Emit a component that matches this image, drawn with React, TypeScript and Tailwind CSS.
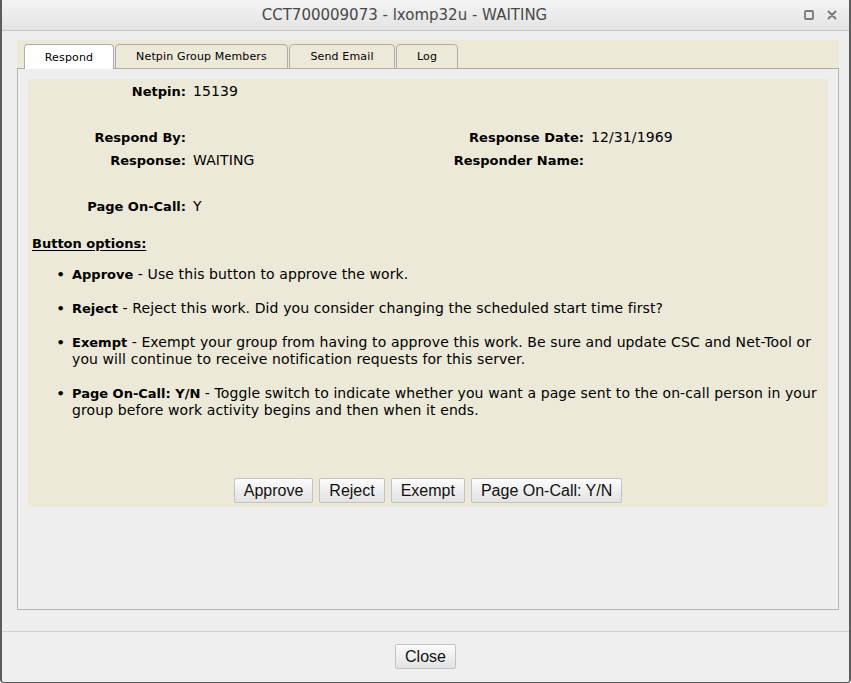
import React from "react";

const tabs = [
  { label: "Respond", w: "w-[90px]", active: true },
  { label: "Netpin Group Members", w: "w-[173px]", active: false },
  { label: "Send Email", w: "w-[106px]", active: false },
  { label: "Log", w: "w-[62px]", active: false },
];

const options = [
  { name: "Approve", text: "Use this button to approve the work." },
  { name: "Reject", text: "Reject this work. Did you consider changing the scheduled start time first?" },
  {
    name: "Exempt",
    text: "Exempt your group from having to approve this work. Be sure and update CSC and Net-Tool or you will continue to receive notification requests for this server.",
  },
  {
    name: "Page On-Call: Y/N",
    text: "Toggle switch to indicate whether you want a page sent to the on-call person in your group before work activity begins and then when it ends.",
  },
];

function Btn({ children }: { children: React.ReactNode }) {
  return (
    <button className="h-[25px] px-[9px] border border-[#c2c2c2] rounded-[2px] bg-gradient-to-b from-[#fcfcfc] to-[#e2e2e2] text-[16px] leading-none text-[#111] font-['Liberation_Sans',Arial,sans-serif]">
      {children}
    </button>
  );
}

function Field({ label, value }: { label: string; value?: string }) {
  return (
    <>
      <div className="text-right font-bold text-[13px] tracking-normal">{label}</div>
      <div className="pl-[7px]">{value}</div>
    </>
  );
}

export default function App() {
  return (
    <div className="w-[851px] h-[683px] flex flex-col bg-[#eeeeee] border-x-2 border-b border-[#5c5c5c] rounded-b-[4px] overflow-hidden font-['DejaVu_Sans',sans-serif] text-black">
      {/* title bar */}
      <div className="h-[31px] shrink-0 flex items-center bg-gradient-to-b from-[#f4f4f4] to-[#e3e3e3] border-b border-[#c4c4c4]">
        <div className="flex-1 pl-[3px] text-center text-[15px] text-[#484848]">
          CCT700009073 - lxomp32u - WAITING
        </div>
        <div className="flex items-center gap-[13px] mr-[12px] text-[#7a7a7a]">
          <svg width="10" height="10" viewBox="0 0 10 10">
            <rect x="1" y="1" width="8" height="8" rx="1" fill="none" stroke="currentColor" strokeWidth="1.8" />
          </svg>
          <svg width="10" height="10" viewBox="0 0 10 10">
            <path d="M1.5 1.5 L8.5 8.5 M8.5 1.5 L1.5 8.5" stroke="currentColor" strokeWidth="2" strokeLinecap="round" />
          </svg>
        </div>
      </div>

      {/* body */}
      <div className="shrink-0 pl-[15px] pr-[10px] pt-[9px] pb-[21px]">
        <div className="h-[29px] flex items-end pl-[7px] gap-[1px] bg-[#ece9d8] border-b border-[#a9a9a9]">
          {tabs.map((t) => (
            <div
              key={t.label}
              className={`${t.w} h-[25px] -mb-px pt-[2px] flex items-center justify-center text-[11px] tracking-[0.15px] rounded-t-[4px] border border-[#adadad] ${
                t.active ? "bg-white border-b-0" : "bg-[#ece9d8]"
              }`}
            >
              {t.label}
            </div>
          ))}
        </div>

        <div className="h-[541px] p-[10px] border-x border-b border-[#b4b4b4]">
          <div className="h-[428px] bg-[#ece9d8] flex flex-col text-[14px] tracking-[0.1px]">
            <div className="pt-[1px] grid grid-cols-[158px_242px_156px_1fr] auto-rows-[23px] items-center">
              <Field label="Netpin:" value="15139" />
              <div />
              <div />
              <div className="col-span-4" />
              <Field label="Respond By:" />
              <Field label="Response Date:" value="12/31/1969" />
              <Field label="Response:" value="WAITING" />
              <Field label="Responder Name:" />
              <div className="col-span-4" />
              <Field label="Page On-Call:" value="Y" />
            </div>

            <div className="mt-[17px] pl-[4px] leading-[17px] text-[13px] font-bold tracking-normal underline underline-offset-2">
              Button options:
            </div>

            <ul className="mt-[14px] flex flex-col gap-[17px] leading-[17px] pr-[1px]">
              {options.map((o) => (
                <li key={o.name} className="flex">
                  <span className="w-[44px] shrink-0 text-right pr-[7px] text-[13px] font-bold">•</span>
                  <span>
                    <b className="text-[13px] tracking-normal">{o.name}</b> - {o.text}
                  </span>
                </li>
              ))}
            </ul>

            <div className="mt-auto pb-[4px] flex justify-center gap-[6px] tracking-normal">
              <Btn>Approve</Btn>
              <Btn>Reject</Btn>
              <Btn>Exempt</Btn>
              <Btn>Page On-Call: Y/N</Btn>
            </div>
          </div>
        </div>
      </div>

      {/* footer */}
      <div className="flex-1 flex justify-center pt-[12px] bg-[#efefef] border-t border-[#d2d2d2]">
        <Btn>Close</Btn>
      </div>
    </div>
  );
}
